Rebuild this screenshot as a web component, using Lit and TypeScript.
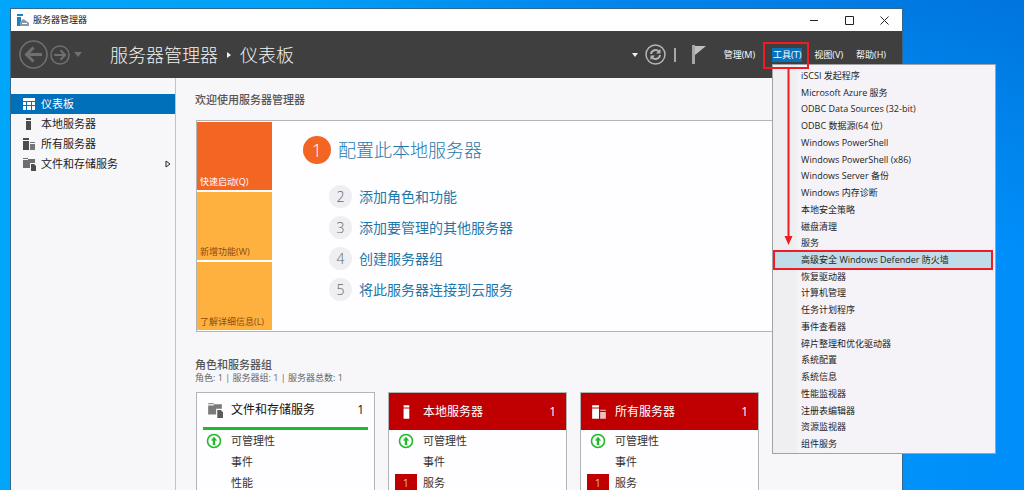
import { LitElement, html, css, svg, nothing } from "lit";
import { customElement, state } from "lit/decorators.js";
import { classMap } from "lit/directives/class-map.js";

type IconName = "dashboard" | "server" | "servers" | "storage";

interface Tile {
  title: string;
  icon: IconName;
  alert: boolean;
  rows: { label: string; ok?: boolean; count?: number }[];
}

const NAV: { label: string; icon: IconName; more?: boolean }[] = [
  { label: "仪表板", icon: "dashboard" },
  { label: "本地服务器", icon: "server" },
  { label: "所有服务器", icon: "servers" },
  { label: "文件和存储服务", icon: "storage", more: true },
];

const TOOLS = [
  "iSCSI 发起程序",
  "Microsoft Azure 服务",
  "ODBC Data Sources (32-bit)",
  "ODBC 数据源(64 位)",
  "Windows PowerShell",
  "Windows PowerShell (x86)",
  "Windows Server 备份",
  "Windows 内存诊断",
  "本地安全策略",
  "磁盘清理",
  "服务",
  "高级安全 Windows Defender 防火墙",
  "恢复驱动器",
  "计算机管理",
  "任务计划程序",
  "事件查看器",
  "碎片整理和优化驱动器",
  "系统配置",
  "系统信息",
  "性能监视器",
  "注册表编辑器",
  "资源监视器",
  "组件服务",
];
const MARKED_TOOL = 11;

const STEPS = ["添加角色和功能", "添加要管理的其他服务器", "创建服务器组", "将此服务器连接到云服务"];

const TILES: Tile[] = [
  {
    title: "文件和存储服务",
    icon: "storage",
    alert: false,
    rows: [{ label: "可管理性", ok: true }, { label: "事件" }, { label: "性能" }],
  },
  {
    title: "本地服务器",
    icon: "server",
    alert: true,
    rows: [{ label: "可管理性", ok: true }, { label: "事件" }, { label: "服务", count: 1 }],
  },
  {
    title: "所有服务器",
    icon: "servers",
    alert: true,
    rows: [{ label: "可管理性", ok: true }, { label: "事件" }, { label: "服务", count: 1 }],
  },
];

const SHAPES = {
  dashboard: svg`<path d="M1 1h12v3H1zM1 5h3v3H1zM5 5h4v3H5zM10 5h3v3h-3zM1 9h3v4H1zM5 9h4v4H5zM10 9h3v4h-3z"/>`,
  server: svg`<path d="M4 1h5v2H4zM4 4h5v9H4z"/>`,
  servers: svg`<path d="M1 1h6v2H1zM1 4h6v9H1z"/><path opacity=".75" d="M8 5h5v1H8zM8 7h5v6H8z"/>`,
  storage: svg`<path opacity=".8" d="M1 1h5v1H1zM1 3h5V2h7v4H8v5H1z"/><path d="M9 7h3l2 2v5H9z"/>`,
};

const icon = (name: IconName) =>
  html`<svg class="icon" viewBox="0 0 14 14" aria-hidden="true">${SHAPES[name]}</svg>`;

@customElement("app-root")
export class AppRoot extends LitElement {
  @state() private menuOpen = true;
  @state() private page = 0;

  static styles = css`
    :host {
      display: block;
      box-sizing: border-box;
      height: 100vh;
      padding: 8px 121px 0 10px;
      overflow: hidden;
      color: #333;
      font: 9px/12px "Open Sans", "Noto Sans CJK SC", sans-serif;
      background:
        linear-gradient(19deg, #008aec00 70%, #0084ec 84%, #0074de 100%),
        linear-gradient(90deg, #00a6fa 0%, #009cf6 50%, #008efa 100%);
    }
    * { box-sizing: border-box; }
    button {
      padding: 0;
      border: 0;
      background: none;
      color: inherit;
      font: inherit;
      text-align: left;
    }
    a { color: inherit; text-decoration: none; }
    h1, h2, h3, p, ul, ol { margin: 0; padding: 0; list-style: none; font-weight: 400; }
    svg { display: block; fill: currentColor; }
    .icon { width: 14px; height: 14px; flex: none; }

    .window {
      display: flex;
      flex-direction: column;
      height: 100%;
      border: 1px solid #35668c;
      border-bottom: 0;
      background: #f7f6f9;
    }
    .titlebar {
      display: flex;
      align-items: center;
      gap: 4px;
      height: 22px;
      flex: none;
      padding: 0 12px 0 6px;
      background: #fff;
      color: #111;
    }
    .titlebar span { flex: 1; }
    .logo { width: 12px; height: 12px; }
    .controls { display: flex; gap: 24px; }
    .controls svg { width: 11px; height: 11px; fill: none; stroke: #222; }

    .header {
      display: flex;
      align-items: center;
      height: 47px;
      flex: none;
      padding: 0 15px 0 8px;
      background: #3f3f3f;
      color: #f2f2f2;
    }
    .history { display: flex; align-items: center; gap: 2px; color: #707070; }
    .history svg { fill: none; stroke: currentColor; }
    .back { width: 29px; height: 29px; }
    .forward { width: 20px; height: 20px; }
    .history .caret { width: 8px; height: 5px; margin-left: 2px; fill: #707070; stroke: none; }
    .crumbs {
      display: flex;
      align-items: center;
      gap: 9px;
      flex: 1;
      margin-left: 28px;
      font-size: 18px;
      line-height: 24px;
      font-weight: 300;
    }
    .crumbs svg { width: 4px; height: 8px; }
    .actions { display: flex; align-items: center; }
    .actions .caret { width: 6px; height: 4px; }
    .refresh { width: 21px; height: 21px; margin-left: 7px; color: #b5b5b5; }
    .divider { width: 2px; height: 14px; margin: 0 16px 0 8px; background: #a8a8a8; }
    .flag { width: 14px; height: 20px; color: #c0c0c0; }
    .menus { display: flex; gap: 11px; margin-left: 17px; }
    .menu-anchor { position: relative; margin-left: 5px; }
    .menus > button, .menu-anchor > button { display: block; height: 14px; padding: 0 1px; line-height: 14px; color: #fff; }
    .menu-anchor > button.open { background: #0672b9; }

    .menu {
      position: absolute;
      z-index: 2;
      top: 16px;
      left: 0;
      display: grid;
      grid-auto-rows: 1fr;
      width: 224px;
      height: 390px;
      padding: 3px 2px 0;
      border: 1px solid #a3a3a6;
      background: linear-gradient(90deg, #efeef0 24px, #f5f3f7 24px);
      color: #1c1c1c;
    }
    .menu li { display: flex; }
    .menu button { flex: 1; padding-left: 26px; white-space: nowrap; }
    .menu .marked button { margin-right: 2px; background: #c0dce8; outline: 2px solid #ee1c24; }
    .frame {
      position: absolute;
      z-index: 3;
      top: -6px;
      right: -7px;
      bottom: -7px;
      left: -9px;
      border: 2px solid #ee1c24;
      pointer-events: none;
    }
    .pointer {
      position: absolute;
      z-index: 3;
      top: 20px;
      left: 12px;
      width: 9px;
      height: 177px;
      color: #ee1c24;
      pointer-events: none;
    }

    .body { display: flex; flex: 1; min-height: 0; overflow: hidden; }
    .sidebar {
      width: 165px;
      flex: none;
      padding-top: 16px;
      border-right: 1px solid #c3c2c6;
    }
    .sidebar button {
      display: flex;
      align-items: center;
      gap: 5px;
      width: 100%;
      height: 20px;
      padding: 0 4px 0 11px;
      font-size: 11px;
      line-height: 16px;
      color: #222;
    }
    .sidebar .icon { color: #4c4c4c; }
    .sidebar span { flex: 1; }
    .sidebar .selected, .sidebar .selected .icon { color: #fff; }
    .sidebar .selected { background: #0070bb; }
    .more { width: 6px; height: 8px; fill: none; stroke: #222; }

    .content { flex: 1; min-width: 0; padding: 15px 16px 0 20px; }
    .heading { margin-left: -1px; font-size: 11px; line-height: 14px; font-weight: 500; color: #555; }
    .welcome {
      display: flex;
      margin: 13px 0 26px;
      padding: 1px 0;
      border: 1px solid #b4b3b6;
      background: #fefdff;
    }
    .tabs { display: grid; gap: 2px; width: 75px; flex: none; }
    .tabs button {
      display: flex;
      align-items: flex-end;
      height: 68px;
      padding: 0 3px 2px;
      background: #ffb140;
      color: #8a4a10;
      white-space: nowrap;
    }
    .tabs .current { background: #f26522; color: #fff; }
    .steps { padding: 14px 0 0 31px; color: #1f78aa; font-weight: 300; }
    .step { display: flex; align-items: center; gap: 7px; }
    .step.first { font-size: 18px; line-height: 28px; }
    .steps ol { display: grid; gap: 8px; padding: 21px 0 0 26px; font-size: 14px; line-height: 23px; }
    .steps b {
      width: 23px;
      border-radius: 50%;
      background: #efeef0;
      color: #666;
      font-weight: 300;
      font-size: 14px;
      text-align: center;
    }
    .steps .first b { width: 28px; background: #f26522; color: #fff; font-size: 18px; }

    .summary { margin: 0 0 8px -1px; color: #666; }
    .tiles { display: flex; gap: 13px; }
    .tile { width: 179px; height: 100vh; flex: none; border: 1px solid #b4b3b6; background: #fefdff; }
    .tile-head {
      display: flex;
      align-items: center;
      gap: 8px;
      height: 37px;
      margin: 0 6px;
      padding: 0 4px;
      border-bottom: 3px solid #1fbb28;
      font-size: 12px;
      line-height: 16px;
      color: #111;
    }
    .tile-head .icon { width: 16px; height: 16px; color: #5a5a5a; }
    .tile-head h3 { flex: 1; font-size: 12px; }
    .alert .tile-head { margin: 0; padding: 0 10px; border: 0; background: #c00000; color: #fff; }
    .alert .tile-head .icon { color: #fff; }
    .tile-row {
      display: flex;
      align-items: center;
      gap: 5px;
      height: 21px;
      padding-left: 5px;
      font-size: 11px;
      line-height: 16px;
    }
    .status { display: flex; justify-content: center; width: 24px; flex: none; }
    .status svg { width: 16px; height: 16px; color: #1fbb28; }
    .status b {
      width: 22px;
      height: 18px;
      line-height: 18px;
      background: #c00000;
      color: #fff;
      font-weight: 300;
      text-align: center;
    }
  `;

  private toggleMenu() {
    this.menuOpen = !this.menuOpen;
  }

  private renderMenu() {
    return html`
      <ul class="menu">
        ${TOOLS.map(
          (tool, i) => html`<li class=${classMap({ marked: i === MARKED_TOOL })}><button>${tool}</button></li>`
        )}
      </ul>
      <div class="frame"></div>
      <svg class="pointer" viewBox="0 0 9 177" aria-hidden="true">
        <path d="M3.500 0h2v168h3l-4 9l-4 -9h3z" />
      </svg>
    `;
  }

  private renderTile(tile: Tile) {
    return html`
      <article class=${classMap({ tile: true, alert: tile.alert })}>
        <div class="tile-head">${icon(tile.icon)}<h3>${tile.title}</h3><span>1</span></div>
        ${tile.rows.map(
          (row) => html`
            <div class="tile-row">
              <div class="status">
                ${row.ok
                  ? html`<svg viewBox="0 0 16 16" aria-hidden="true">
                      <circle cx="8" cy="8" r="6.500" fill="none" stroke="currentColor" stroke-width="1.600" />
                      <path d="M8 3.800l3.200 3.700h-2v4.500h-2.400v-4.500h-2z" />
                    </svg>`
                  : nothing}
                ${row.count ? html`<b>${row.count}</b>` : nothing}
              </div>
              <a href="#">${row.label}</a>
            </div>
          `
        )}
      </article>
    `;
  }

  render() {
    return html`
      <div class="window">
        <div class="titlebar">
          <svg class="logo" viewBox="0 0 12 12" aria-hidden="true">
            <path fill="#1683c4" d="M0 0h6v2H0zM0 3h4v9H0z" />
            <path fill="#8b98a3" d="M3 8l3-3 2 1 4 3v3H3z" />
            <path fill="#fff" d="M5 9h5v1H5z" />
          </svg>
          <span>服务器管理器</span>
          <div class="controls">
            <button aria-label="最小化"><svg viewBox="0 0 11 11"><path d="M1 5.500h8" /></svg></button>
            <button aria-label="最大化"><svg viewBox="0 0 11 11"><path d="M1.500 1.500h8v8h-8z" /></svg></button>
            <button aria-label="关闭"><svg viewBox="0 0 11 11"><path d="M1.500 1.500l8 8M9.500 1.500l-8 8" /></svg></button>
          </div>
        </div>

        <header class="header">
          <div class="history">
            <button aria-label="后退">
              <svg class="back" viewBox="0 0 29 29">
                <circle cx="14.500" cy="14.500" r="13.500" stroke-width="1.600" />
                <path stroke-width="3" d="M23 14.500H8M14.500 7.500l-7 7 7 7" />
              </svg>
            </button>
            <button aria-label="前进">
              <svg class="forward" viewBox="0 0 21 21">
                <circle cx="10.500" cy="10.500" r="9.500" stroke-width="1.500" />
                <path stroke-width="2" d="M4.500 10.500h11M11 5.500l5 5-5 5" />
              </svg>
            </button>
            <svg class="caret" viewBox="0 0 8 5"><path d="M0 0h8l-4 5z" /></svg>
          </div>
          <h1 class="crumbs">
            <span>服务器管理器</span>
            <svg viewBox="0 0 4 8" aria-hidden="true"><path d="M0 1l4 3-4 3z" /></svg>
            <span>仪表板</span>
          </h1>
          <div class="actions">
            <svg class="caret" viewBox="0 0 6 4"><path d="M0 0h6l-3 4z" /></svg>
            <button aria-label="刷新">
              <svg class="refresh" viewBox="0 0 21 21" fill="none">
                <circle cx="10.500" cy="10.500" r="9.500" fill="none" stroke="currentColor" stroke-width="1.500" />
                <path fill="none" stroke="currentColor" stroke-width="2" d="M6 10a4.500 4.500 0 0 1 8-2.300M15 11a4.500 4.500 0 0 1-8 2.300" />
                <path d="M15.500 5v4.500h-4.500zM5.500 16v-4.500h4.500z" />
              </svg>
            </button>
            <div class="divider"></div>
            <button aria-label="通知">
              <svg class="flag" viewBox="0 0 14 20"><path d="M0 0h3v19H0z" opacity=".8" /><path d="M3 1h11L3 10z" /></svg>
            </button>
          </div>
          <nav class="menus">
            <button>管理(M)</button>
            <div class="menu-anchor">
              <button class=${classMap({ open: this.menuOpen })} aria-expanded=${this.menuOpen} @click=${this.toggleMenu}>
                工具(T)
              </button>
              ${this.menuOpen ? this.renderMenu() : nothing}
            </div>
            <button>视图(V)</button>
            <button>帮助(H)</button>
          </nav>
        </header>

        <div class="body">
          <nav class="sidebar">
            ${NAV.map(
              (item, i) => html`
                <button class=${classMap({ selected: i === this.page })} @click=${() => (this.page = i)}>
                  ${icon(item.icon)}<span>${item.label}</span>
                  ${item.more
                    ? html`<svg class="more" viewBox="0 0 6 8"><path d="M1 1l4 3-4 3z" /></svg>`
                    : nothing}
                </button>
              `
            )}
          </nav>
          <main class="content">
            <h2 class="heading">欢迎使用服务器管理器</h2>
            <section class="welcome">
              <div class="tabs">
                <button class="current">快速启动(Q)</button>
                <button>新增功能(W)</button>
                <button>了解详细信息(L)</button>
              </div>
              <div class="steps">
                <div class="step first"><b>1</b><a href="#">配置此本地服务器</a></div>
                <ol>
                  ${STEPS.map((label, i) => html`<li class="step"><b>${i + 2}</b><a href="#">${label}</a></li>`)}
                </ol>
              </div>
            </section>
            <h2 class="heading">角色和服务器组</h2>
            <p class="summary">角色: 1 | 服务器组: 1 | 服务器总数: 1</p>
            <div class="tiles">${TILES.map((tile) => this.renderTile(tile))}</div>
          </main>
        </div>
      </div>
    `;
  }
}
